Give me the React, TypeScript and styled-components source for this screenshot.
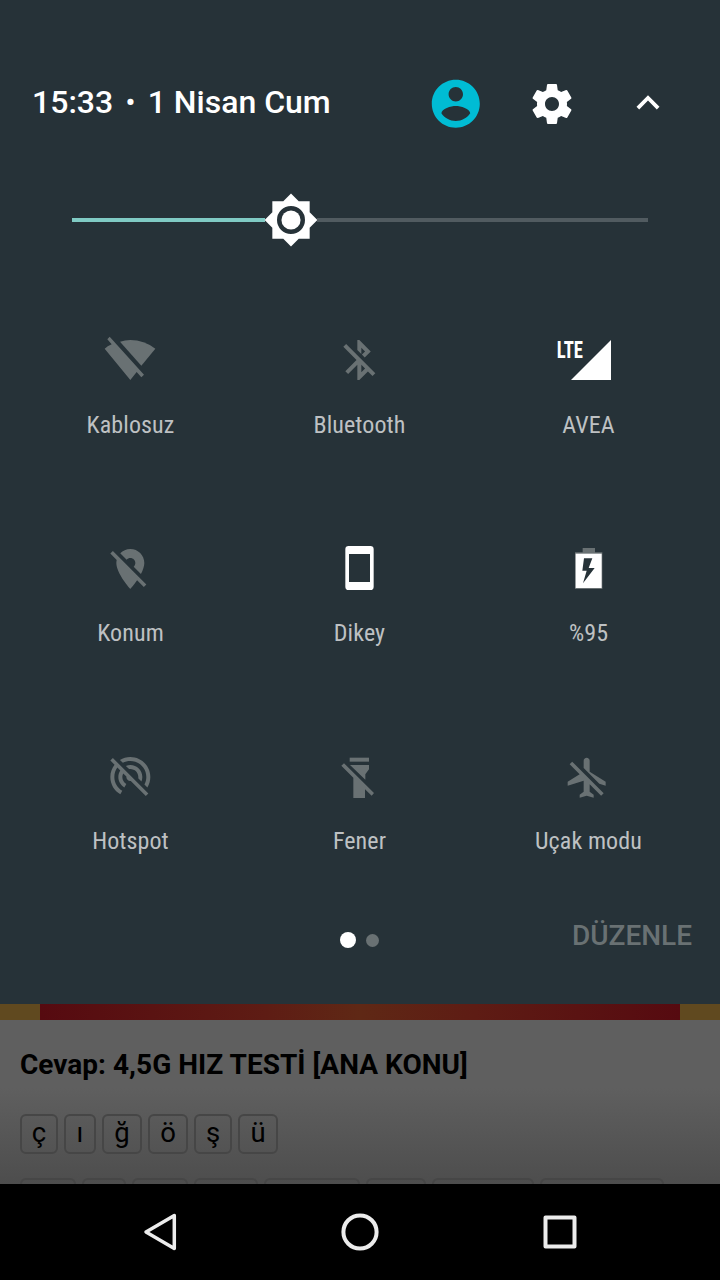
import React from 'react';
import styled, { createGlobalStyle } from 'styled-components';

const GlobalStyle = createGlobalStyle`
  * { box-sizing: border-box; }
  body { margin: 0; background: #000; font-family: Roboto, "Noto Sans", sans-serif; }
`;

const Screen = styled.div`
  width: 720px;
  height: 1280px;
  display: flex;
  flex-direction: column;
  overflow: hidden;
`;

const Shade = styled.section`
  height: 1004px;
  flex: none;
  display: flex;
  flex-direction: column;
  background: #263238;
`;

const Header = styled.header`
  height: 96px;
  margin-top: 56px;
  padding: 0 49px 0 32px;
  display: flex;
  align-items: center;
`;

const Clock = styled.div`
  flex: 1;
  display: flex;
  font-size: 32px;
  line-height: 40px;
  font-weight: 500;
  color: #fff;
  white-space: pre;
  margin-top: -4px;
`;

const Bullet = styled.span`
  width: 34.5px;
  font-size: 28px;
  line-height: 41px;
  text-align: center;
`;

const HeaderIcon = styled.svg<{ $size: number; $gap?: number; $color?: string }>`
  width: ${p => p.$size}px;
  height: ${p => p.$size}px;
  margin-left: ${p => p.$gap ?? 0}px;
  fill: ${p => p.$color ?? '#fff'};
  flex: none;
`;

const Brightness = styled.div`
  height: 56px;
  margin: 40px 72px 0;
  display: flex;
  align-items: center;
`;

const Track = styled.div<{ $width: number; $color: string }>`
  width: ${p => p.$width}px;
  height: 4px;
  background: ${p => p.$color};
`;

const Thumb = styled.svg`
  width: 56px;
  height: 56px;
  margin: 0 -2px;
  flex: none;
  fill: #fff;
`;

const Tiles = styled.div`
  display: grid;
  grid-template-columns: repeat(3, 229px);
  grid-auto-rows: 208px;
  padding: 80px 0 0 15.5px;
`;

const Tile = styled.div`
  display: flex;
  flex-direction: column;
  align-items: center;
`;

const TileIcon = styled.svg<{ $on?: boolean }>`
  width: 64px;
  height: 64px;
  fill: ${p => (p.$on ? '#fff' : '#697173')};
`;

const TileLabel = styled.div`
  margin-top: 19px;
  padding-left: 1px;
  font-family: "Roboto Condensed", Roboto, sans-serif;
  font-size: 24px;
  line-height: 28px;
  letter-spacing: 0.1px;
  color: #bec1c3;
  white-space: nowrap;
`;

const Footer = styled.footer`
  height: 60px;
  margin-top: -48px;
  display: grid;
  grid-template-columns: 1fr auto 1fr;
  align-items: center;
  padding-right: 28px;
`;

const Dots = styled.div`
  grid-column: 2;
  display: flex;
  align-items: center;
  gap: 10px;
  margin: 12px 0 0 27px;
`;

const Dot = styled.i<{ $active?: boolean }>`
  width: ${p => (p.$active ? 16 : 13)}px;
  height: ${p => (p.$active ? 16 : 13)}px;
  border-radius: 50%;
  background: ${p => (p.$active ? '#fff' : '#697173')};
`;

const Edit = styled.div`
  justify-self: end;
  margin-top: 4px;
  font-size: 28px;
  line-height: 32px;
  font-weight: 500;
  color: #697173;
`;

const Page = styled.main`
  height: 180px;
  flex: none;
  overflow: hidden;
  background: linear-gradient(#5f5f5f 0, #5f5f5f 84px, #515151 160px, #4d4d4d 180px);
`;

const Banner = styled.div`
  height: 16px;
  padding: 0 40px;
  background: #60491f;
`;

const BannerFill = styled.div`
  height: 100%;
  background: linear-gradient(90deg, #560a10, #5e1c14 35%, #5f2815 50%, #5e1c14 68%, #560a10);
`;

const Title = styled.h1`
  margin: 29px 0 0 20px;
  font-size: 28px;
  line-height: 32px;
  font-weight: 700;
  letter-spacing: 0.03px;
  color: #000;
  white-space: nowrap;
`;

const Keys = styled.div<{ $top: number }>`
  display: flex;
  gap: 6px;
  margin: ${p => p.$top}px 0 0 20px;
`;

const Key = styled.span<{ $width: number }>`
  width: ${p => p.$width}px;
  height: 40px;
  flex: none;
  border: 2px solid #464646;
  border-radius: 6px;
  font-size: 27.5px;
  line-height: 33px;
  text-align: center;
  color: #000;
`;

const NavBar = styled.nav`
  height: 96px;
  flex: none;
  display: flex;
  justify-content: center;
  align-items: center;
  gap: 160px;
  background: #000;
`;

const NavIcon = styled.svg`
  width: 40px;
  height: 40px;
  fill: none;
  stroke: #ececec;
  stroke-width: 4;
  stroke-linejoin: round;
`;

const tiles = [
  {
    label: 'Kablosuz', box: '84 24 192 192',
    art: <><path d="M119 50L222 164L214 172L200 156L181 180L104 86Q112 78 125 73L112 58Z" /><path d="M150 65Q165 60 181 60Q222 60 256 86L214 137Z" /></>,
  },
  {
    label: 'Bluetooth', box: '771 24 192 192',
    art: <path transform="translate(796 48) scale(6)" d="M13 5.83l1.88 1.88-1.6 1.6 1.41 1.41 3.02-3.02L12 2h-1v5.03l2 2v-3.2zM5.41 4L4 5.41 10.59 12 5 17.59 6.41 19 11 14.41V22h1l4.29-4.29 2.3 2.29L20 18.59 5.41 4zM13 18.17v-3.76l1.88 1.88L13 18.17z" />,
  },
  {
    label: 'AVEA', box: '108 24 192 192', on: true,
    art: <><path d="M153 180L273 60V180Z" /><text x="110" y="114" fontSize="72" fontWeight="700" fontFamily="'Roboto Condensed', Roboto, sans-serif" textLength="79" lengthAdjust="spacingAndGlyphs">LTE</text></>,
  },
  {
    label: 'Konum', box: '84 18 192 192',
    art: <path transform="translate(109 45) scale(6)" d="M12 6.5c1.38 0 2.5 1.12 2.5 2.5 0 .74-.33 1.39-.83 1.85l3.63 3.63c.98-1.86 1.7-3.8 1.7-5.48 0-3.87-3.13-7-7-7-1.98 0-3.76.83-5.04 2.15l3.19 3.19c.46-.52 1.11-.84 1.85-.84zm4.37 9.6l-4.63-4.63-.11-.11L3.27 3 2 4.27l3.18 3.18C5.07 7.95 5 8.47 5 9c0 5.25 7 13 7 13s1.67-1.85 3.38-4.35L18.73 21 20 19.73l-3.63-3.63z" />,
  },
  {
    label: 'Dikey', box: '771 18 192 192', on: true,
    art: <path fillRule="evenodd" d="M836 48H901Q911 48 911 58V170Q911 180 901 180H836Q826 180 826 170V58Q826 48 836 48ZM837 72V156H900V72Z" />,
  },
  {
    label: '%95', box: '108 18 192 192', on: true,
    art: <><path fill="#697173" d="M188 54H225V67H247V177H165V67H188Z" /><path d="M167 71H245V174H167Z" /><path fill="#263238" d="M192 85L187 122H200L189 160L224 114H206L217 85Z" /></>,
  },
  {
    label: 'Hotspot', box: '84 12 192 192',
    art: <path transform="translate(109 39) scale(6)" d="M17.56 14.24c.28-.69.44-1.45.44-2.24 0-3.31-2.69-6-6-6-.79 0-1.55.16-2.24.44l1.62 1.62c.2-.03.41-.06.62-.06 2.21 0 4 1.79 4 4 0 .21-.02.42-.05.63l1.61 1.61zM12 4c4.42 0 8 3.58 8 8 0 1.35-.35 2.62-.95 3.74l1.47 1.47C21.46 15.69 22 13.91 22 12c0-5.52-4.48-10-10-10-1.91 0-3.69.55-5.21 1.47l1.46 1.46C9.37 4.34 10.65 4 12 4zM3.27 2.5L2 3.77l2.1 2.1C2.79 7.57 2 9.69 2 12c0 3.7 2.01 6.92 4.99 8.65l1-1.73C5.61 17.53 4 14.96 4 12c0-1.76.57-3.38 1.53-4.69l1.43 1.44C6.36 9.68 6 10.8 6 12c0 2.22 1.21 4.15 3 5.19l1-1.74c-1.19-.7-2-1.97-2-3.45 0-.65.17-1.25.44-1.79l1.58 1.58L10 12c0 1.1.9 2 2 2l.21-.02.01.01 7.51 7.51L21 20.23 4.27 3.5l-1-1z" />,
  },
  {
    label: 'Fener', box: '771 12 192 192',
    art: <><path d="M839 53H897V65H839Z" /><path d="M840 75H897V88L886 103V119Z" /><path d="M822 70L912 159L905 167L885 148V174H850V113L814 77Z" /></>,
  },
  {
    label: 'Uçak modu', box: '108 12 192 192',
    art: <path transform="translate(131 41) scale(6)" d="M13 9V3.5c0-.83-.67-1.5-1.5-1.5S10 2.67 10 3.5v3.68l7.83 7.83L21 16v-2l-8-5zM3 5.27l4.99 4.99L2 14v2l8-2.5V19l-2 1.5V22l3.5-1 3.5 1v-1.5L13 19v-3.73L18.73 21 20 19.73 4.27 4 3 5.27z" />,
  },
];

const letters: [string, number][] = [['ç', 38], ['ı', 32], ['ğ', 40], ['ö', 40], ['ş', 38], ['ü', 40]];
const clippedKeys = [56, 44, 56, 64, 96, 60, 102, 124];

export default function App() {
  return (
    <Screen>
      <GlobalStyle />
      <Shade>
        <Header>
          <Clock>
            <span>15:33</span>
            <Bullet>•</Bullet>
            <span>1 Nisan Cum</span>
          </Clock>
          <HeaderIcon $size={57.6} $color="#00bcd4" viewBox="0 0 24 24">
            <path d="M12 2C6.48 2 2 6.48 2 12s4.48 10 10 10 10-4.48 10-10S17.52 2 12 2zm0 3c1.66 0 3 1.34 3 3s-1.34 3-3 3-3-1.34-3-3 1.34-3 3-3zm0 14.2c-2.5 0-4.71-1.28-6-3.22.03-1.99 4-3.08 6-3.08 1.99 0 5.97 1.09 6 3.08-1.29 1.94-3.5 3.22-6 3.22z" />
          </HeaderIcon>
          <HeaderIcon $size={48} $gap={43} viewBox="0 0 24 24">
            <path d="M19.43 12.98c.04-.32.07-.64.07-.98s-.03-.66-.07-.98l2.11-1.65c.19-.15.24-.42.12-.64l-2-3.46c-.12-.22-.39-.3-.61-.22l-2.49 1c-.52-.4-1.08-.73-1.69-.98l-.38-2.65C14.46 2.18 14.25 2 14 2h-4c-.25 0-.46.18-.49.42l-.38 2.65c-.61.25-1.17.59-1.69.98l-2.49-1c-.23-.09-.49 0-.61.22l-2 3.46c-.13.22-.07.49.12.64l2.11 1.65c-.04.32-.07.65-.07.98s.03.66.07.98l-2.11 1.65c-.19.15-.24.42-.12.64l2 3.46c.12.22.39.3.61.22l2.49-1c.52.4 1.08.73 1.69.98l.38 2.65c.03.24.24.42.49.42h4c.25 0 .46-.18.49-.42l.38-2.65c.61-.25 1.17-.59 1.69-.98l2.49 1c.23.09.49 0 .61-.22l2-3.46c.12-.22.07-.49-.12-.64l-2.11-1.65zM12 15.5c-1.93 0-3.5-1.57-3.5-3.5s1.57-3.5 3.5-3.5 3.5 1.57 3.5 3.5-1.57 3.5-3.5 3.5z" />
          </HeaderIcon>
          <HeaderIcon $size={46} $gap={49} viewBox="0 0 24 24">
            <path d="M12 7.4l-6 6 1.41 1.41L12 10.23l4.59 4.58L18 13.4z" />
          </HeaderIcon>
        </Header>
        <Brightness>
          <Track $width={193} $color="#80cbc4" />
          <Thumb viewBox="0 0 24 24">
            <path fillRule="evenodd" d="M20 15.31L23.31 12 20 8.69V4h-4.69L12 .69 8.69 4H4v4.69L.69 12 4 15.31V20h4.69L12 23.31 15.31 20H20v-4.69zM12 18a6 6 0 1 1 0-12 6 6 0 0 1 0 12z" />
            <circle cx="12" cy="12" r="4.1" />
          </Thumb>
          <Track $width={331} $color="#515b60" />
        </Brightness>
        <Tiles>
          {tiles.map(t => (
            <Tile key={t.label}>
              <TileIcon $on={t.on} viewBox={t.box}>{t.art}</TileIcon>
              <TileLabel>{t.label}</TileLabel>
            </Tile>
          ))}
        </Tiles>
        <Footer>
          <Dots><Dot $active /><Dot /></Dots>
          <Edit>DÜZENLE</Edit>
        </Footer>
      </Shade>
      <Page>
        <Banner><BannerFill /></Banner>
        <Title>Cevap: 4,5G HIZ TESTİ [ANA KONU]</Title>
        <Keys $top={33}>
          {letters.map(([c, w]) => <Key key={c} $width={w}>{c}</Key>)}
        </Keys>
        <Keys $top={24}>
          {clippedKeys.map((w, i) => <Key key={i} $width={w} />)}
        </Keys>
      </Page>
      <NavBar>
        <NavIcon viewBox="0 0 40 40"><path d="M6 20L34.3 3.5V36.5Z" strokeWidth="3.5" /></NavIcon>
        <NavIcon viewBox="0 0 40 40"><circle cx="20" cy="20" r="16.6" /></NavIcon>
        <NavIcon viewBox="0 0 40 40"><rect x="5.5" y="5.5" width="29" height="29" /></NavIcon>
      </NavBar>
    </Screen>
  );
}
